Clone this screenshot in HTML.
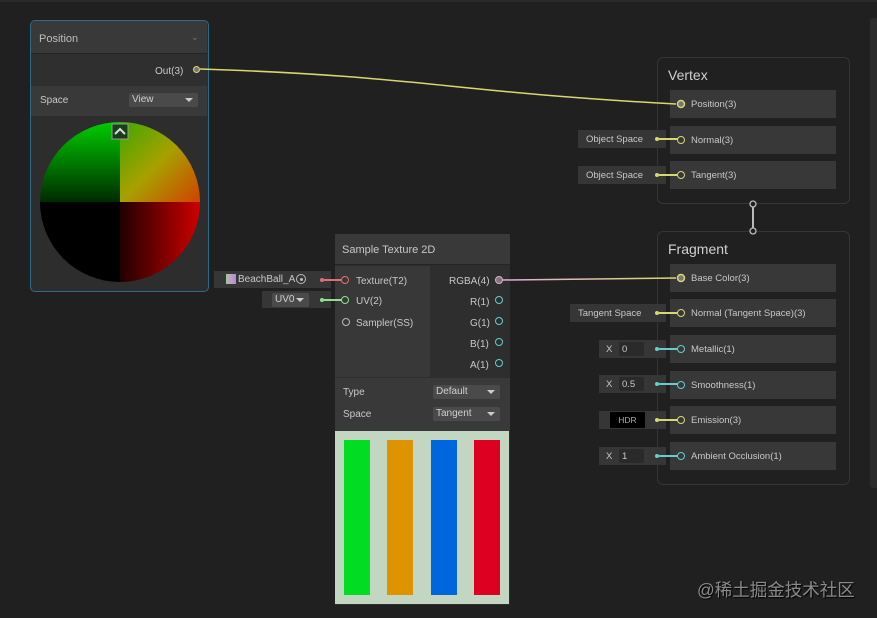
<!DOCTYPE html>
<html><head><meta charset="utf-8"><style>
*{margin:0;padding:0;box-sizing:border-box}
body{width:877px;height:618px;background:#202020;position:relative;overflow:hidden;font-family:"Liberation Sans","Noto Sans CJK SC",sans-serif;font-size:10px;color:#c8c8c8}
.a{position:absolute}
.row{position:absolute;left:670px;width:166px;height:28px;background:#383838}
.row span{position:absolute;left:21px;top:9px;font-size:9.5px}
.port{position:absolute;left:7px;top:10px;width:8px;height:8px;border-radius:50%;border:1.5px solid #d7d77a}
.fld{position:absolute;background:#363636;height:18px;font-size:9.5px;color:#c8c8c8}
.dot{position:absolute;width:4px;height:4px;border-radius:50%}
.dd{position:absolute;background:#4a4a4a;height:14px;border-radius:2px;font-size:10px;padding-left:3px;line-height:14px;color:#d0d0d0}
.dd:after{content:"";position:absolute;right:5px;top:5px;border-left:4px solid transparent;border-right:4px solid transparent;border-top:4px solid #ccc}
</style></head><body>
<div class="a" style="left:0;top:0;width:877px;height:2px;background:#2a2a2a"></div>
<div class="a" style="left:870px;top:18px;width:7px;height:470px;background:#2b2b2b;border-radius:3px 0 0 3px"></div>

<!-- Position node -->
<div class="a" style="left:30px;top:20px;width:179px;height:272px;border:1.5px solid #2f6a8c;border-radius:5px;background:#2d2d2d;overflow:hidden">
 <div class="a" style="left:0;top:0;width:176px;height:33px;background:#393939;border-bottom:1px solid #252525"></div>
 <div class="a" style="left:8px;top:12px;font-size:11px;color:#bdbdbd">Position</div>
 <div class="a" style="left:160px;top:11px;color:#777;font-size:9px">⌄</div>
 <div class="a" style="left:0;top:34px;width:176px;height:31px;background:#2f2f2f"></div>
 <div class="a" style="left:124px;top:45px;font-size:10px">Out(3)</div>
 <div class="a" style="left:162px;top:45px;width:7px;height:7px;border-radius:50%;border:1.5px solid #d8d870;background:#777"></div>
 <div class="a" style="left:0;top:65px;width:176px;height:30px;background:#393939"></div>
 <div class="a" style="left:9px;top:74px;font-size:10px">Space</div>
 <div class="dd" style="left:98px;top:72px;width:69px">View</div>
 <svg class="a" style="left:8px;top:99px" width="162" height="165">
  <defs>
   <linearGradient id="tl" x1="0" y1="0" x2="0" y2="1"><stop offset="0" stop-color="#00d000"/><stop offset="1" stop-color="#002a00"/></linearGradient>
   <linearGradient id="tr" x1="0" y1="0" x2="1" y2="1"><stop offset="0" stop-color="#3ca800"/><stop offset=".5" stop-color="#a8a000"/><stop offset="1" stop-color="#d04000"/></linearGradient>
   <linearGradient id="br" x1="0" y1="0" x2="1" y2="0"><stop offset="0" stop-color="#200000"/><stop offset="1" stop-color="#d00000"/></linearGradient>
   <clipPath id="c"><circle cx="81" cy="82" r="80"/></clipPath>
  </defs>
  <g clip-path="url(#c)">
   <rect x="0" y="0" width="81" height="82" fill="url(#tl)"/>
   <rect x="81" y="0" width="81" height="82" fill="url(#tr)"/>
   <rect x="0" y="82" width="81" height="82" fill="#000"/>
   <rect x="81" y="82" width="81" height="82" fill="url(#br)"/>
  </g>
  <rect x="73" y="4" width="16" height="15" fill="#184018" stroke="#999" stroke-width="1"/>
  <path d="M76 14 L81 9 L86 14" stroke="#ddd" stroke-width="2" fill="none"/>
 </svg>
</div>

<!-- Sample Texture 2D -->
<div class="a" style="left:335px;top:234px;width:175px;height:371px;background:#2d2d2d">
 <div class="a" style="left:0;top:0;width:175px;height:31px;background:#393939;border-bottom:1px solid #252525"></div>
 <div class="a" style="left:7px;top:10px;font-size:11px">Sample Texture 2D</div>
 <div class="a" style="left:0;top:32px;width:95px;height:111px;background:#383838"></div>
 <div class="a" style="left:96px;top:32px;width:79px;height:111px;background:#2e2e2e"></div>
 <div class="a" style="left:21px;top:42px">Texture(T2)</div>
 <div class="a" style="left:21px;top:62px">UV(2)</div>
 <div class="a" style="left:21px;top:84px">Sampler(SS)</div>
 <div class="a" style="left:7px;top:84px;width:8px;height:8px;border-radius:50%;border:1.5px solid #bbb"></div>
 <div class="a" style="left:114px;top:42px">RGBA(4)</div>
 <div class="a" style="left:160px;top:42px;width:8px;height:8px;border-radius:50%;border:1.5px solid #e8a8d8;background:#777"></div>
 <div class="a" style="left:135px;top:63px">R(1)</div>
 <div class="a" style="left:135px;top:84px">G(1)</div>
 <div class="a" style="left:135px;top:105px">B(1)</div>
 <div class="a" style="left:135px;top:126px">A(1)</div>
 <div class="a" style="left:160px;top:62px;width:8px;height:8px;border-radius:50%;border:1.5px solid #6cc"></div>
 <div class="a" style="left:160px;top:83px;width:8px;height:8px;border-radius:50%;border:1.5px solid #6cc"></div>
 <div class="a" style="left:160px;top:104px;width:8px;height:8px;border-radius:50%;border:1.5px solid #6cc"></div>
 <div class="a" style="left:160px;top:125px;width:8px;height:8px;border-radius:50%;border:1.5px solid #6cc"></div>
 <div class="a" style="left:0;top:144px;width:175px;height:53px;background:#393939"></div>
 <div class="a" style="left:8px;top:153px">Type</div>
 <div class="a" style="left:8px;top:175px">Space</div>
 <div class="dd" style="left:98px;top:151px;width:67px">Default</div>
 <div class="dd" style="left:98px;top:173px;width:67px">Tangent</div>
 <div class="a" style="left:0;top:197px;width:174px;height:173px;background:#c2d6c2">
  <div class="a" style="left:9px;top:9px;width:26px;height:155px;background:#00dd22"></div>
  <div class="a" style="left:52px;top:9px;width:26px;height:155px;background:#dd9400"></div>
  <div class="a" style="left:96px;top:9px;width:26px;height:155px;background:#0066dd"></div>
  <div class="a" style="left:139px;top:9px;width:26px;height:155px;background:#dd0020"></div>
 </div>
</div>

<!-- inputs to sample texture -->
<div class="fld" style="left:214px;top:271px;width:117px;height:17px"></div>
<div class="a" style="left:226px;top:274px;width:10px;height:10px;background:linear-gradient(90deg,#9c9,#c9c,#99c)"></div>
<div class="a" style="left:238px;top:274px;font-size:10px">BeachBall_A</div>
<div class="a" style="left:296px;top:274px;width:10px;height:10px;border-radius:50%;border:1px solid #bbb"></div>
<div class="a" style="left:299.5px;top:277.5px;width:3px;height:3px;border-radius:50%;background:#bbb"></div>
<div class="dot" style="left:320px;top:278px;background:#e07070"></div>
<div class="a" style="left:324px;top:279px;width:18px;height:2px;background:#e07070"></div>
<div class="a" style="left:341px;top:276px;width:8px;height:8px;border-radius:50%;border:1.5px solid #e07070;background:#383838"></div>
<div class="fld" style="left:262px;top:291px;width:69px;height:17px"></div>
<div class="dd" style="left:272px;top:293px;width:37px">UV0</div>
<div class="dot" style="left:320px;top:298px;background:#90e090"></div>
<div class="a" style="left:324px;top:299px;width:18px;height:2px;background:#90e090"></div>
<div class="a" style="left:341px;top:296px;width:8px;height:8px;border-radius:50%;border:1.5px solid #90e090;background:#383838"></div>

<!-- Vertex -->
<div class="a" style="left:657px;top:57px;width:193px;height:147px;border:1px solid #353535;border-radius:6px;background:#202020"></div>
<div class="a" style="left:668px;top:67px;font-size:14px;color:#d0d0d0">Vertex</div>
<div class="row" style="top:90px"><div class="port" style="background:#777"></div><span>Position(3)</span></div>
<div class="row" style="top:126px"><div class="port"></div><span>Normal(3)</span></div>
<div class="row" style="top:161px"><div class="port"></div><span>Tangent(3)</span></div>
<div class="fld" style="left:578px;top:130px;width:88px"><span class="a" style="left:8px;top:4px">Object Space</span></div>
<div class="dot" style="left:655px;top:137px;background:#d8d870"></div>
<div class="a" style="left:659px;top:138px;width:19px;height:2px;background:#d8d870"></div>
<div class="fld" style="left:578px;top:166px;width:88px"><span class="a" style="left:8px;top:4px">Object Space</span></div>
<div class="dot" style="left:655px;top:173px;background:#d8d870"></div>
<div class="a" style="left:659px;top:174px;width:19px;height:2px;background:#d8d870"></div>

<!-- Fragment -->
<div class="a" style="left:657px;top:231px;width:193px;height:254px;border:1px solid #353535;border-radius:6px;background:#202020"></div>
<div class="a" style="left:668px;top:241px;font-size:14px;color:#d0d0d0">Fragment</div>
<div class="row" style="top:264px"><div class="port" style="background:#777"></div><span>Base Color(3)</span></div>
<div class="row" style="top:299px"><div class="port"></div><span>Normal (Tangent Space)(3)</span></div>
<div class="row" style="top:335px"><div class="port" style="border-color:#6cc"></div><span>Metallic(1)</span></div>
<div class="row" style="top:371px"><div class="port" style="border-color:#6cc"></div><span>Smoothness(1)</span></div>
<div class="row" style="top:406px"><div class="port"></div><span>Emission(3)</span></div>
<div class="row" style="top:442px"><div class="port" style="border-color:#6cc"></div><span>Ambient Occlusion(1)</span></div>

<div class="fld" style="left:570px;top:304px;width:96px"><span class="a" style="left:8px;top:4px">Tangent Space</span></div>
<div class="dot" style="left:655px;top:311px;background:#d8d870"></div>
<div class="a" style="left:659px;top:312px;width:19px;height:2px;background:#d8d870"></div>

<div class="fld" style="left:599px;top:340px;width:67px"><span class="a" style="left:7px;top:4px">X</span><div class="a" style="left:20px;top:2px;width:25px;height:14px;background:#2a2a2a;border-radius:2px;padding:2px 3px">0</div></div>
<div class="dot" style="left:655px;top:347px;background:#6cc"></div>
<div class="a" style="left:659px;top:348px;width:19px;height:2px;background:#6cc"></div>

<div class="fld" style="left:599px;top:375px;width:67px"><span class="a" style="left:7px;top:4px">X</span><div class="a" style="left:20px;top:2px;width:25px;height:14px;background:#2a2a2a;border-radius:2px;padding:2px 3px">0.5</div></div>
<div class="dot" style="left:655px;top:382px;background:#6cc"></div>
<div class="a" style="left:659px;top:383px;width:19px;height:2px;background:#6cc"></div>

<div class="fld" style="left:599px;top:411px;width:67px"><div class="a" style="left:11px;top:1px;width:35px;height:16px;background:#000;text-align:center;line-height:16px;font-size:8.5px;color:#aaa">HDR</div></div>
<div class="dot" style="left:655px;top:418px;background:#d8d870"></div>
<div class="a" style="left:659px;top:419px;width:19px;height:2px;background:#d8d870"></div>

<div class="fld" style="left:599px;top:447px;width:67px"><span class="a" style="left:7px;top:4px">X</span><div class="a" style="left:20px;top:2px;width:25px;height:14px;background:#2a2a2a;border-radius:2px;padding:2px 3px">1</div></div>
<div class="dot" style="left:655px;top:454px;background:#6cc"></div>
<div class="a" style="left:659px;top:455px;width:19px;height:2px;background:#6cc"></div>

<svg class="a" style="left:0;top:0" width="877" height="618">
<defs><linearGradient id="g1" x1="0" x2="1"><stop offset="0" stop-color="#e8a8d8"/><stop offset="1" stop-color="#d8d870"/></linearGradient></defs>
<path d="M200 69 C 420 76, 450 92, 676 104" stroke="#d8d870" stroke-width="1.5" fill="none"/>
<path d="M503 280 L676 278" stroke="url(#g1)" stroke-width="1.5" fill="none"/>
<line x1="753" y1="204" x2="753" y2="231" stroke="#bbb" stroke-width="2"/>
<circle cx="753" cy="204" r="3" fill="#202020" stroke="#bbb" stroke-width="1.3"/>
<circle cx="753" cy="231" r="3" fill="#202020" stroke="#bbb" stroke-width="1.3"/>
<circle cx="681" cy="104" r="3.5" fill="#777" stroke="#d7d77a" stroke-width="1.5"/>
<circle cx="681" cy="278" r="3.5" fill="#777" stroke="#d7d77a" stroke-width="1.5"/>
</svg>

<div class="a" style="left:697px;top:577px;font-size:17.5px;color:#8a8a8a;text-shadow:1px 1px 1px #000">@稀土掘金技术社区</div>
</body></html>
